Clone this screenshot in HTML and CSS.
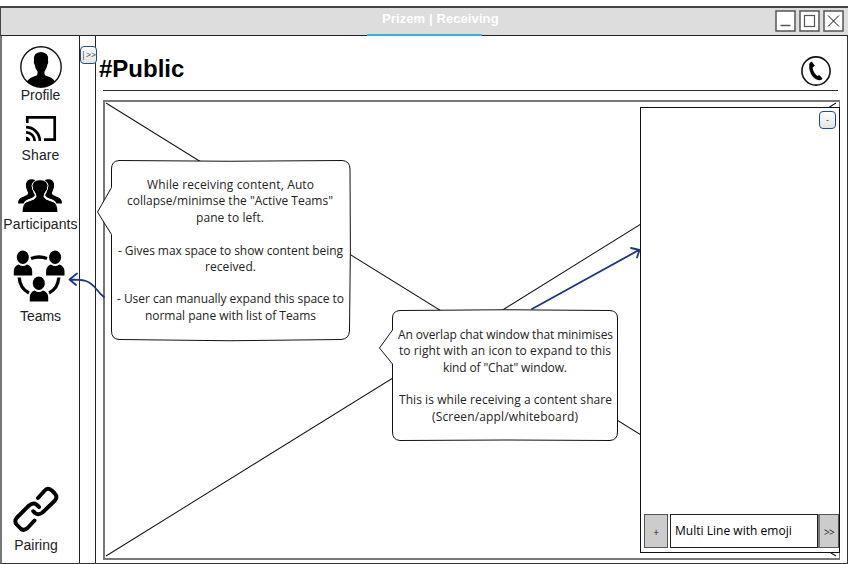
FILE: index.html
```html
<!DOCTYPE html>
<html lang="en">
<head>
<meta charset="utf-8">
<title>Prizem | Receiving</title>
<link rel="stylesheet" href="styles.css">
</head>
<body>
<div class="window">
  <header class="titlebar">
    <h1 class="tab">Prizem | Receiving</h1>
    <div class="controls">
      <svg class="control" viewBox="0 0 21 22"><rect x="1" y="1" width="19" height="20"/><path d="M5.500 15.500H15.500"/></svg>
      <svg class="control" viewBox="0 0 21 22"><rect x="1" y="1" width="19" height="20"/><rect class="thin" x="5.500" y="5.500" width="10" height="11"/></svg>
      <svg class="control" viewBox="0 0 21 22"><rect x="1" y="1" width="19" height="20"/><path class="cross" d="M5 5.500L16 16.500M16 5.500L5 16.500"/></svg>
    </div>
  </header>
  <div class="body">
    <nav class="sidebar">
      <a class="item profile">
        <svg width="42" height="42" viewBox="0 0 42 42"><circle cx="21" cy="21" r="20.200" fill="#fff" stroke="#111" stroke-width="1.400"/><path d="M7 35.500Q9 31.500 16.500 29.500Q18 28.500 17.500 25.500Q15 22.500 14.600 18.500Q13.300 17 14 14Q13 6.500 21 6Q29 6.500 28 14Q28.700 17 27.400 18.500Q27 22.500 24.500 25.500Q24 28.500 25.500 29.500Q33 31.500 35 35.500Q29 41.200 21 41.200T7 35.500Z"/></svg>
        <span>Profile</span>
      </a>
      <a class="item share">
        <svg width="32" height="27" viewBox="0 0 32 27" fill="none" stroke="#000" stroke-width="2.700"><path d="M2.300 8V2.300H29.700V24.600H19"/><path d="M1 12.200A13.800 13.800 0 0 1 14.800 26M1 17.300A8.700 8.700 0 0 1 9.700 26"/><path d="M1 21.700A4.300 4.300 0 0 1 5.300 26H1Z" fill="#000" stroke="none"/></svg>
        <span>Share</span>
      </a>
      <a class="item participants">
        <svg width="44" height="34" viewBox="0 0 44 34"><path id="rear" d="M0 24.500Q0 19.500 4 18.200L9 16Q11 14.500 9.300 12Q7.200 8 8 4.500Q9.500 0 14 .4Q16 0 18 2Q14.500 4 14.500 9Q14.500 13 17 16Q16 18.500 11 20Q7 21 5.500 24.500Z"/><use href="#rear" transform="matrix(-1 0 0 1 44 0)"/><path d="M4 33.500Q4 25.500 8 23L16 20Q19.500 18 17 14Q14 11 14 6.500Q15 .7 22 .7T30 6.500Q30 11 27 14Q24.500 18 28 20L36 23Q40 25.500 40 33.500Z" stroke="#fff" stroke-width="1"/></svg>
        <span>Participants</span>
      </a>
      <a class="item teams">
        <svg width="52" height="52" viewBox="0 0 52 52"><g fill="none" stroke="#000" stroke-width="3.300"><path d="M18 8.500Q26 5.500 34 8.500M6.200 27.500Q7 38.500 16 43M45.800 27.500Q45 38.500 36 43"/></g><g id="member"><ellipse cx="9.800" cy="7.200" rx="6" ry="6.700"/><path d="M.8 25.500V21Q1 16 5.500 14.500Q10 17.500 14 14.500Q19 16 19.200 21V25.500Z"/></g><use href="#member" x="32.300"/><use href="#member" x="16" y="26"/></svg>
        <span>Teams</span>
      </a>
      <a class="item pairing">
        <svg width="46" height="46" viewBox="0 0 46 46" fill="none" stroke="#000" stroke-width="3.900" stroke-linecap="round" stroke-linejoin="round"><path d="M25 12L31.500 4.700Q34.500 1.200 38.500 4.200L41.800 7.500Q45 11 42 14.500L29.500 26.500Q25.500 29.500 22 27L20.200 25.200"/><path d="M21.500 34.500L14.500 42Q10.500 45.500 7.500 42.500L3.700 38.500Q.8 35 4 31.500L16 19.500Q20 16 23.500 18.500L26 21"/></svg>
        <span>Pairing</span>
      </a>
    </nav>
    <div class="rail"><button class="sketch-button expand">|&gt;&gt;</button></div>
    <main class="main">
      <div class="heading">
        <h2>#Public</h2>
        <svg class="phone" width="30" height="30" viewBox="0 0 30 30"><circle cx="15" cy="15" r="14.100" fill="#fff" stroke="#111" stroke-width="1.600"/><path d="M8.200 8.500Q8.200 6.500 10.800 5.500L13.800 9.800L11.600 11.600Q12 16.500 16.300 20L18.200 19L21.500 22.500Q20.500 24.500 18.500 24.300Q13.500 23.500 10 18.200Q7.500 13 8.200 8.500Z"/></svg>
      </div>
      <section class="stage">
        <svg class="diagonals" viewBox="0 0 733 456" preserveAspectRatio="none"><path d="M1 1L730 454M730 1L1 454"/></svg>
        <aside class="chat">
          <button class="sketch-button collapse">-</button>
          <div class="composer">
            <button class="key add">+</button>
            <div class="field">Multi Line with emoji</div>
            <button class="key send">&gt;&gt;</button>
          </div>
        </aside>
      </section>
    </main>
  </div>
</div>
<svg class="notes" viewBox="0 0 848 564">
  <g class="arrow"><path d="M104 297C96 291 95 284 86 281Q80 279.500 70 279.500M77 273.500L69.500 279.500L76 285"/></g>
  <g class="bubble">
    <path d="M119 160.500Q230 162 342 160.500Q350 161 350 169Q351 250 349.500 331Q349 339 341 339.500Q230 342 119 339.500Q111.500 339 111.500 331V234.500L97.500 212L111.500 187.500V169Q111.500 161 119 160.500Z"/>
    <text x="147" y="189" textLength="167">While receiving content, Auto</text>
    <text x="127" y="205" textLength="206">collapse/minimse the "Active Teams"</text>
    <text x="196" y="222" textLength="68">pane to left.</text>
    <text x="118" y="255" textLength="225">- Gives max space to show content being</text>
    <text x="205" y="271" textLength="51">received.</text>
    <text x="117" y="303" textLength="227">- User can manually expand this space to</text>
    <text x="145" y="320" textLength="171">normal pane with list of Teams</text>
  </g>
  <g class="bubble">
    <path d="M400 310.500Q505 309 610 310.500Q617.500 311 617.500 318V432Q617.500 440 610 440.500Q505 439.500 400 440.500Q392.500 440 392.500 432V364L379.500 348L392.500 330V318Q392.500 311 400 310.500Z"/>
    <text x="398" y="339" textLength="215">An overlap chat window that minimises</text>
    <text x="399" y="355" textLength="212">to right with an icon to expand to this</text>
    <text x="443" y="372" textLength="124">kind of "Chat" window.</text>
    <text x="399" y="404" textLength="213">This is while receiving a content share</text>
    <text x="432" y="421" textLength="146">(Screen/appl/whiteboard)</text>
  </g>
  <g class="arrow"><path d="M532 309L639 250M631 248L639.500 250L637 257.500"/></g>
</svg>
</body>
</html>
```

FILE: styles.css
```css
* { box-sizing: border-box; }
body {
  margin: 0;
  width: 848px;
  height: 564px;
  overflow: hidden;
  background: #fff;
  color: #000;
  font-family: "Liberation Sans", sans-serif;
}
.window {
  display: flex;
  flex-direction: column;
  height: 557px;
  margin-top: 7px;
  border-left: 2px solid #777;
  border-right: 1px solid #333;
  border-bottom: 1px solid #333;
}
.titlebar {
  display: grid;
  grid-template-columns: 364px 115px 1fr;
  height: 30px;
  margin: -1px -1px 0 -2px;
  padding-left: 2px;
  border-top: 2px solid #444;
  border-bottom: 1px solid #222;
  border-left: 1px solid #444;
  background: #ddd;
}
.tab {
  grid-column: 2;
  position: relative;
  margin: 0;
  padding-left: 15px;
  color: #fff;
  font: bold 13px/21px "Liberation Sans", sans-serif;
  letter-spacing: .1px;
  white-space: nowrap;
}
.tab::after {
  content: "";
  position: absolute;
  left: 0;
  bottom: -1px;
  width: 115px;
  height: 2px;
  background: #34b2e4;
}
.controls {
  display: flex;
  justify-content: flex-end;
  gap: 3px;
  padding: 2px 4px 0 0;
}
.control { width: 21px; height: 22px; fill: #fff; stroke: #555; stroke-width: 1.500; }
.control .thin { stroke-width: 1.200; }
.control .cross { stroke: #111; stroke-width: 1; }

.body { display: flex; flex: 1; min-height: 0; }
.sidebar {
  display: flex;
  flex-direction: column;
  width: 78px;
  padding-top: 10px;
  border-right: 1px solid #222;
}
.item {
  display: flex;
  flex-direction: column;
  align-items: center;
  color: #222;
  font-size: 14px;
  line-height: 16px;
}
.profile { height: 69px; }
.profile svg { margin-bottom: -1px; }
.share { height: 63px; letter-spacing: .1px; }
.share svg { margin-bottom: 5px; }
.participants { height: 72px; letter-spacing: .1px; }
.participants svg { margin: 1px 2px 3px 0; }
.teams svg { margin: 0 3px 6px 0; }
.pairing { margin: auto 9px 10px 0; }
.pairing svg { margin-bottom: 5px; }

.rail {
  display: flex;
  width: 16px;
  padding-top: 10px;
  border-right: 1px solid #222;
}
.sketch-button {
  flex: none;
  padding: 0;
  border: 1px solid #1d4f80;
  border-radius: 4px;
  background: linear-gradient(#fff, #e4e4e4);
  color: #333;
  font: 9px/14px "Open Sans", sans-serif;
}
.expand { width: 17px; height: 18px; z-index: 1; }

.main {
  display: flex;
  flex-direction: column;
  flex: 1;
  padding: 0 7px 3px 7px;
}
.heading {
  display: flex;
  justify-content: space-between;
  height: 55px;
  margin-right: 2px;
  padding-right: 6px;
  border-bottom: 1px solid #333;
}
.heading h2 { margin: 18px 0 0 -4px; font-size: 24px; line-height: 30px; }
.phone { margin: 20px 1px 0 0; }
.stage {
  display: flex;
  justify-content: flex-end;
  position: relative;
  flex: 1;
  margin: 9px 0 0;
  padding: 5px 0 0;
  border: solid #777;
  border-width: 2px 1px 2px 2px;
}
.diagonals {
  position: absolute;
  inset: 0;
  width: 100%;
  height: 100%;
  fill: none;
  stroke: #111;
}
.chat {
  display: flex;
  flex-direction: column;
  justify-content: space-between;
  position: relative;
  width: 200px;
  height: 446px;
  margin-right: -1px;
  padding: 3px 0 4px 3px;
  border: 1px solid #111;
  background: #fff;
}
.collapse { align-self: flex-end; width: 17px; height: 18px; margin-right: 3px; }
.composer { display: flex; height: 34px; gap: 2px; }
.key {
  padding: 2px 0 0;
  border: 1px solid #555;
  background: #ccc;
  color: #222;
  font: 10px/14px "Open Sans", sans-serif;
}
.add { width: 24px; }
.send { width: 21px; margin-left: -2px; border-left: 2px solid #777; letter-spacing: -.7px; }
.field {
  flex: 1;
  padding-left: 4px;
  border: 1px solid #222;
  font: 12px/31px "Open Sans", sans-serif;
  letter-spacing: .02px;
  white-space: nowrap;
}

.notes { position: absolute; inset: 0; width: 848px; height: 564px; z-index: 2; pointer-events: none; }
.bubble path { fill: #fff; stroke: #111; }
.bubble text { fill: #222; font: 12px "Open Sans", sans-serif; }
.arrow path { fill: none; stroke: #1d3588; stroke-width: 1.800; stroke-linecap: round; stroke-linejoin: round; }
```
